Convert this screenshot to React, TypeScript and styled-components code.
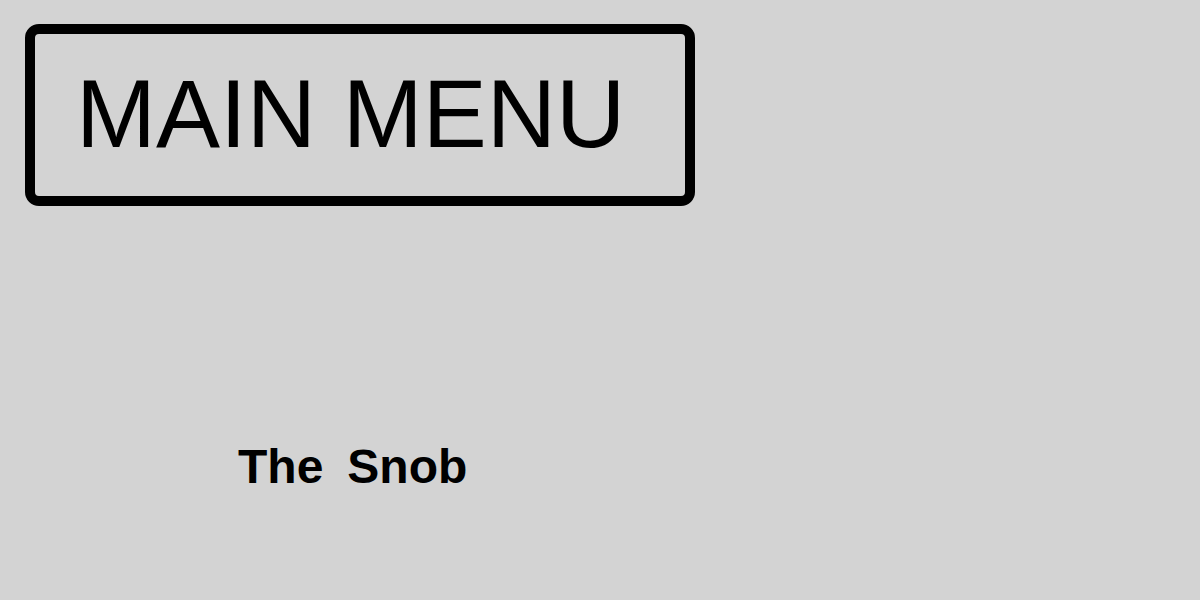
import React from 'react';
import styled, { createGlobalStyle } from 'styled-components';

const GlobalStyle = createGlobalStyle`
  html, body {
    margin: 0;
    padding: 0;
    background: #d3d3d3;
  }
`;

const Page = styled.div`
  background: #d3d3d3;
  display: flex;
  flex-direction: column;
  font-family: 'Liberation Sans', Arial, sans-serif;
  height: 600px;
  padding: 24px 0 0 25px;
  box-sizing: border-box;
  width: 1200px;
`;

const MenuButton = styled.button`
  align-items: center;
  background: transparent;
  border: 10px solid #000;
  border-radius: 14px;
  box-sizing: border-box;
  color: #000;
  cursor: pointer;
  display: flex;
  font: 96px/1 'Liberation Sans', Arial, sans-serif;
  height: 182px;
  padding: 0 0 2px 41px;
  width: 670px;
`;

const Caption = styled.div`
  display: flex;
  font: bold 48px/1 'Liberation Sans', Arial, sans-serif;
  gap: 24px;
  margin: 237px 0 0 213px;
`;

const App = () => (
  <Page>
    <GlobalStyle />
    <MenuButton>MAIN MENU</MenuButton>
    <Caption>
      <span>The</span>
      <span>Snob</span>
    </Caption>
  </Page>
);

export default App;
